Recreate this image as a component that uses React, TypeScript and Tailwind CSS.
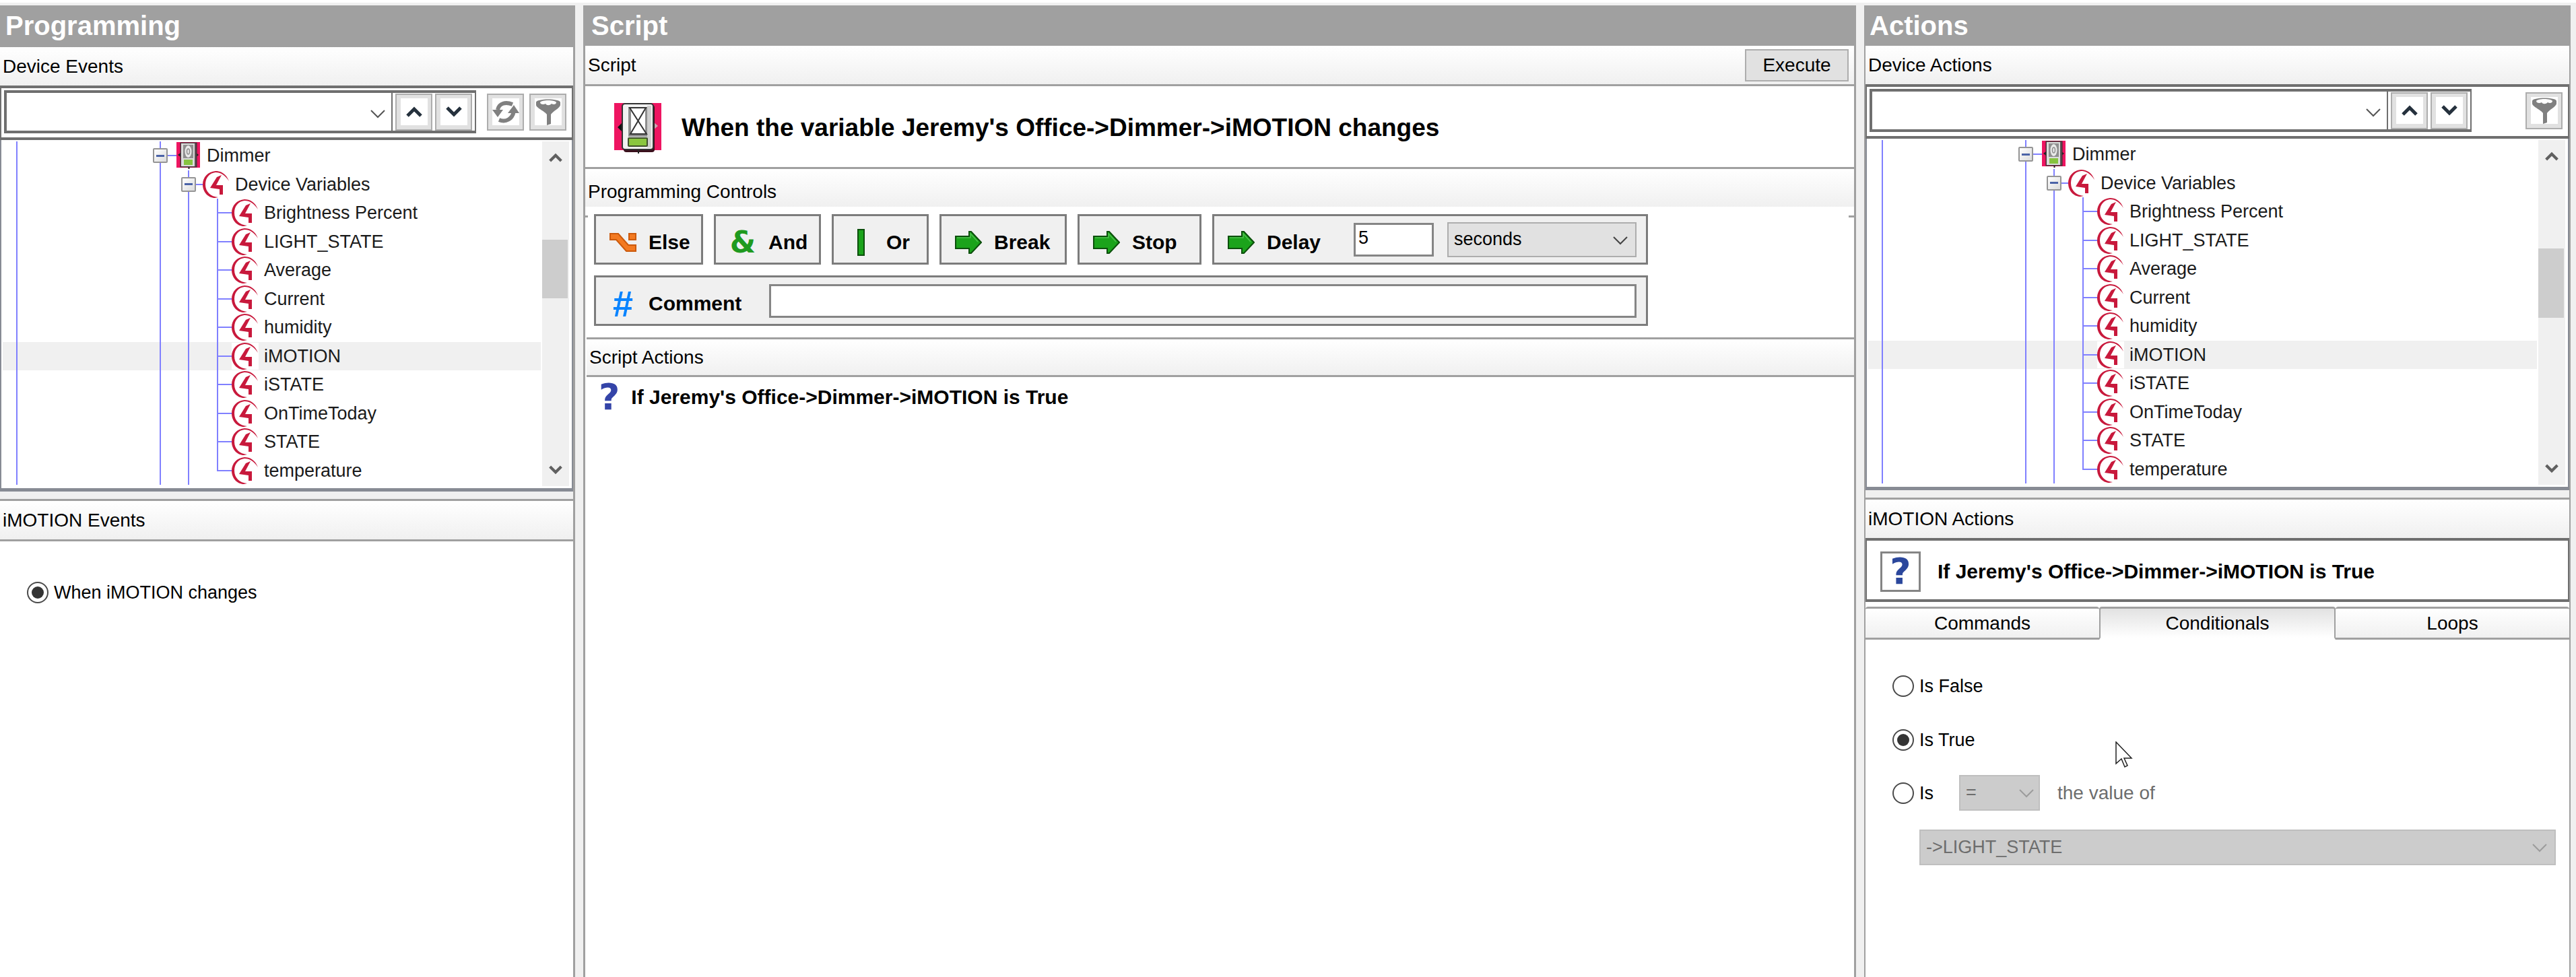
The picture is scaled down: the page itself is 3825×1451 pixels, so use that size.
import type { ReactNode } from "react";

const variables = [
  "Brightness Percent",
  "LIGHT_STATE",
  "Average",
  "Current",
  "humidity",
  "iMOTION",
  "iSTATE",
  "OnTimeToday",
  "STATE",
  "temperature",
];

function DimmerIcon({ className }: { className: string }) {
  return (
    <svg className={className} viewBox="0 0 70 75" aria-hidden="true">
      <rect width="70" height="70" fill="#ee1561" />
      <path d="M5 36l7-7v14z" fill="#111" />
      <path d="M65 34l-7-6v12z" fill="#c9a5b0" />
      <rect x="14" y="3" width="46" height="70" rx="4" fill="#3a0f1c" />
      <rect x="12" y="1" width="46" height="68" rx="4" fill="#f1f1f1" stroke="#333" strokeWidth="2" />
      <rect x="49" y="4" width="6" height="62" fill="#cfcfcf" />
      <rect x="21" y="6" width="28" height="44" fill="#8d8d8d" />
      <rect x="25" y="8" width="21" height="38" fill="#fff" />
      <path d="M23 7h24L24 46h24z M24 46L47 7M23 7l25 39" fill="none" stroke="#333" strokeWidth="2" />
      <rect x="21" y="52" width="28" height="12" rx="1" fill="#8ac63f" stroke="#3f4f2c" strokeWidth="2" />
      <path d="M36 70v5" stroke="#222" strokeWidth="2" />
    </svg>
  );
}

function DimmerIconSmall() {
  return (
    <svg className="h-10 w-[35px]" viewBox="0 0 35 40" aria-hidden="true">
      <rect width="35" height="38" fill="#ee1561" />
      <path d="M2 19l4-3v6zM33 19l-4-3v6z" fill="#222" />
      <rect x="6" y="1" width="24" height="36" fill="#5a5053" stroke="#3a2a2e" strokeWidth="1" />
      <rect x="7" y="2" width="20" height="34" fill="#dcdcdc" />
      <rect x="10" y="4" width="15" height="20" fill="#8f8f8f" />
      <ellipse cx="17.5" cy="14" rx="5" ry="9" fill="#e9e9e9" />
      <ellipse cx="17.5" cy="14" rx="2" ry="4" fill="none" stroke="#8d8d8d" strokeWidth="1.5" />
      <rect x="11" y="26" width="13" height="8" fill="#86c440" />
      <path d="M18.5 37v3" stroke="#222" strokeWidth="2" />
    </svg>
  );
}

function VariableIcon() {
  return (
    <svg className="h-10 w-10" viewBox="0 0 40 40" aria-hidden="true">
      <path
        d="M39 15C35 4 27 0 19 0 8 1 0 9 0 20s8 20 18 20l5-1C12 38 4 31 4 20 4 10 10 3 19 2c8 0 14 4 20 13z"
        fill="#c8193c"
      />
      <path d="M21 9l7-3-8 15h10v14h-5v-8l-14-2z" fill="#c8193c" />
    </svg>
  );
}

function Chevron({ className, up, width = 2 }: { className: string; up?: boolean; width?: number }) {
  return (
    <svg className={className} viewBox="0 0 24 16" fill="none" stroke="currentColor" strokeWidth={width} aria-hidden="true">
      <path d={up ? "M2 14L12 4l10 10" : "M2 2l10 10L22 2"} />
    </svg>
  );
}

function RefreshIcon() {
  return (
    <svg className="h-10 w-10" viewBox="0 0 40 40" aria-hidden="true">
      <path d="M8 17C10 7 20 5 30 9M32 19C30 31 20 36 10 32" fill="none" stroke="#808080" strokeWidth="6" />
      <path d="M0 17h16L8 28zM23 22h17L32 10z" fill="#808080" />
    </svg>
  );
}

function FilterIcon() {
  return (
    <svg className="h-10 w-9" viewBox="0 0 36 40" aria-hidden="true">
      <path d="M0 6C0 0 36 0 36 6v4c0 4-12 10-14 14v14l-6 2V24C14 20 0 14 0 10z" fill="#808080" />
      <path d="M6 6c2-4 22-4 24 0 0 3-4 4-7 2-3 3-7 3-9 0-3 2-8 1-8-2z" fill="#fff" />
    </svg>
  );
}

function ArrowIcon() {
  return (
    <svg className="h-9 w-10" viewBox="0 0 40 36" aria-hidden="true">
      <path d="M1 9h20V2l3 0 15 16-15 16h-3v-7H1z" fill="#1ba31b" stroke="#0c4f0c" strokeWidth="2" />
      <path d="M3 11h20V5l11 12" fill="none" stroke="#4cc04c" strokeWidth="1.5" />
    </svg>
  );
}

function ElseIcon() {
  return (
    <svg className="h-7 w-10" viewBox="0 0 40 28" aria-hidden="true">
      <g fill="#f37a21" stroke="#cc5a0c" strokeWidth="2">
        <path d="M1 1h12l15 17h11v9H25L10 10H1z" />
        <rect x="29" y="1" width="10" height="9" />
      </g>
    </svg>
  );
}

function PanelTitle({ children }: { children: ReactNode }) {
  return <h2 className="flex h-15 items-center bg-[#a0a0a0] px-2 text-[40px] font-bold text-white">{children}</h2>;
}

function SectionBar({ className = "h-[57px]", children }: { className?: string; children: ReactNode }) {
  return (
    <div
      className={`flex items-center justify-between bg-linear-to-b from-white to-[#f0f0f0] pr-2 pl-1 ${className}`}
    >
      {children}
    </div>
  );
}

function ToolButton({ label, children }: { label: string; children: ReactNode }) {
  return (
    <button
      type="button"
      aria-label={label}
      className="flex size-[55px] items-center justify-center border-2 border-[#adadad] bg-[#e1e1e1]"
    >
      <span className="flex size-10 items-center justify-center bg-white text-[#25313d]">{children}</span>
    </button>
  );
}

function SearchBar({ label, refresh }: { label: string; refresh?: boolean }) {
  return (
    <div className="flex items-center border-x-2 border-y-4 border-[#6f6f6f] bg-white pt-[3px] pr-2 pb-[6px] pl-1">
      <div className={`flex flex-1 items-center border-4 border-r-2 border-[#6f6f6f] ${refresh ? "mr-4" : "mr-20"}`}>
        <div className="relative flex-1 border-r-2 border-[#6f6f6f]">
          <input type="text" aria-label={label} className="block h-14 w-full bg-white px-2 text-[28px] outline-none" />
          <Chevron className="absolute top-6 right-2 h-4 w-6 text-[#555]" />
        </div>
        <div className="flex gap-1 px-1">
          <ToolButton label="Find previous">
            <Chevron up width={5} className="h-4 w-6" />
          </ToolButton>
          <ToolButton label="Find next">
            <Chevron width={5} className="h-4 w-6" />
          </ToolButton>
        </div>
      </div>
      <div className="flex gap-2">
        {refresh && (
          <ToolButton label="Refresh">
            <RefreshIcon />
          </ToolButton>
        )}
        <ToolButton label="Filter">
          <FilterIcon />
        </ToolButton>
      </div>
    </div>
  );
}

function Toggle() {
  return (
    <button
      type="button"
      aria-label="Collapse"
      className="absolute top-1/2 -left-3 flex size-[22px] -translate-y-1/2 items-center justify-center rounded-xs border-2 border-[#959595] bg-linear-to-br from-white to-[#dcdcdc]"
    >
      <span className="h-[3px] w-3 bg-[#4b63a7]" />
    </button>
  );
}

function Guide({ className }: { className: string }) {
  return <span className={`shrink-0 self-stretch border-l-2 border-[#8080ff] ${className}`} />;
}

function DeviceTree({ thumbTop, thumbHeight }: { thumbTop: string; thumbHeight: string }) {
  return (
    <div className="flex border-2 border-t-0 border-b-[5px] border-[#878b94] bg-white pt-[2px] pr-1 pb-[3px] pl-[2px]">
      <ul className="mb-[2px] grid h-[510px] min-w-0 flex-1 auto-rows-fr text-[27px] text-[#1a1a1a]">
        <li className="flex items-center pl-5">
          <Guide className="w-[213px]" />
          <span className="relative flex w-[25px] items-center self-stretch border-l-2 border-[#8080ff]">
            <span className="h-[2px] w-full bg-[#8080ff]" />
            <Toggle />
          </span>
          <DimmerIconSmall />
          <span className="ml-[10px]">Dimmer</span>
        </li>
        <li className="flex items-center pl-5">
          <Guide className="w-[213px]" />
          <Guide className="w-[42px]" />
          <span className="relative flex w-[22px] items-center self-stretch border-l-2 border-[#8080ff]">
            <span className="h-[2px] w-full bg-[#8080ff]" />
            <Toggle />
          </span>
          <VariableIcon />
          <span className="ml-2">Device Variables</span>
        </li>
        {variables.map((name, i) => (
          <li key={name} className={`flex items-center pl-5 ${name === "iMOTION" ? "bg-[#f0f0f0]" : ""}`}>
            <Guide className="w-[213px]" />
            <Guide className="w-[42px]" />
            <Guide className="w-[43px]" />
            <span className="flex w-[22px] flex-col self-stretch">
              <span className="flex-1 border-b-2 border-l-2 border-[#8080ff]" />
              <span className={`flex-1 border-[#8080ff] ${i === variables.length - 1 ? "" : "border-l-2"}`} />
            </span>
            <span className="bg-white">
              <VariableIcon />
            </span>
            <span className="ml-2">{name}</span>
          </li>
        ))}
      </ul>
      <div className="ml-[2px] flex w-10 flex-col items-center justify-between bg-[#f0f0f0] py-4 text-[#606060]">
        <Chevron up width={5} className="h-4 w-5" />
        <div className={`flex w-full flex-1 flex-col pr-[2px] ${thumbTop}`}>
          <div className={`w-full bg-[#cdcdcd] ${thumbHeight}`} />
        </div>
        <Chevron width={5} className="h-4 w-5" />
      </div>
    </div>
  );
}

function Radio({ name, label, checked }: { name: string; label: string; checked?: boolean }) {
  return (
    <label className="flex items-center gap-2 text-[27px] leading-8">
      <input
        type="radio"
        name={name}
        defaultChecked={checked}
        className="size-8 appearance-none rounded-full border-2 border-[#4a4a4a] bg-white bg-clip-content p-[5px] checked:bg-[#333]"
      />
      {label}
    </label>
  );
}

function ControlButton({ label, icon, className }: { label: string; icon: ReactNode; className: string }) {
  return (
    <button
      type="button"
      className={`flex h-[75px] items-center gap-[18px] border-3 border-[#7c7c7c] bg-[#f0f0f0] pt-2 pl-5 text-[30px] font-bold ${className}`}
    >
      <span className="flex w-10 justify-center">{icon}</span>
      {label}
    </button>
  );
}

function ProgrammingPanel() {
  return (
    <section className="flex flex-col bg-white">
      <PanelTitle>Programming</PanelTitle>
      <div className="flex flex-1 flex-col border-t-2 border-r-3 border-[#a0a0a0]">
        <SectionBar>Device Events</SectionBar>
        <SearchBar label="Search device events" refresh />
        <DeviceTree thumbTop="pt-[114px]" thumbHeight="h-[87px]" />
        <div className="h-[11px] bg-[#f0f0f0]" />
        <div className="border-y-3 border-[#a0a0a0]">
          <SectionBar>iMOTION Events</SectionBar>
        </div>
        <div className="px-10 pt-[60px]">
          <Radio name="event" label="When iMOTION changes" checked />
        </div>
      </div>
    </section>
  );
}

function ScriptPanel() {
  return (
    <section className="flex flex-col bg-white">
      <PanelTitle>
        <span className="pl-1">Script</span>
      </PanelTitle>
      <div className="flex flex-1 flex-col border-x-3 border-[#a0a0a0]">
        <SectionBar>
          Script
          <button type="button" className="h-12 w-[154px] border-2 border-[#adadad] bg-[#e1e1e1]">
            Execute
          </button>
        </SectionBar>
        <div className="flex h-[126px] items-center gap-[30px] border-y-3 border-[#a0a0a0] pt-1 pl-[43px]">
          <DimmerIcon className="h-[75px] w-[70px]" />
          <h1 className="text-[37px] font-bold">When the variable Jeremy&apos;s Office-&gt;Dimmer-&gt;iMOTION changes</h1>
        </div>
        <SectionBar className="h-14 pt-3">Programming Controls</SectionBar>
        <div className="flex justify-between pt-[11px]">
          <span className="mt-[2px] h-[3px] w-1 bg-[#a0a0a0]" />
          <div className="flex flex-1 flex-col items-start pl-[9px]">
            <div className="flex flex-col gap-4">
              <div className="flex gap-4">
                <ControlButton className="w-[162px]" label="Else" icon={<ElseIcon />} />
                <ControlButton
                  className="w-[159px]"
                  label="And"
                  icon={
                    <span className="font-['DejaVu_Sans',sans-serif] text-[44px] leading-9 font-bold text-[#1f9a1f]">
                      &amp;
                    </span>
                  }
                />
                <ControlButton
                  className="w-[144px]"
                  label="Or"
                  icon={<span className="h-10 w-[11px] border-2 border-[#0c4f0c] bg-[#1ba31b]" />}
                />
                <ControlButton className="w-[189px]" label="Break" icon={<ArrowIcon />} />
                <ControlButton className="w-[184px]" label="Stop" icon={<ArrowIcon />} />
                <div className="flex h-[75px] w-[647px] items-center border-3 border-[#7c7c7c] bg-[#f0f0f0] pr-[14px] pl-5">
                  <label htmlFor="delay" className="flex flex-1 items-center gap-[18px] pt-2 text-[30px] font-bold">
                    <ArrowIcon />
                    Delay
                  </label>
                  <input
                    id="delay"
                    type="text"
                    defaultValue="5"
                    className="h-[50px] w-[119px] border-3 border-[#858585] bg-white px-1 pb-1 text-[27px]"
                  />
                  <div className="relative ml-5">
                    <select
                      aria-label="Delay unit"
                      className="h-[52px] w-[281px] appearance-none border-2 border-[#adadad] bg-[#e1e1e1] px-2 text-[27px]"
                    >
                      <option>seconds</option>
                    </select>
                    <Chevron className="pointer-events-none absolute top-5 right-3 h-4 w-6 text-[#444]" />
                  </div>
                </div>
              </div>
              <div className="flex h-[75px] items-center border-3 border-[#7c7c7c] bg-[#f0f0f0] pr-[14px] pl-5">
                <label htmlFor="comment" className="flex w-[237px] items-center gap-[18px] pt-2 text-[30px] font-bold">
                  <span className="w-10 text-center text-[54px] leading-9 text-[#0a84ff]">#</span>
                  Comment
                </label>
                <input id="comment" type="text" className="h-[50px] flex-1 border-3 border-[#858585] bg-white px-2" />
              </div>
            </div>
          </div>
          <span className="mt-[2px] h-[3px] w-2 bg-[#a0a0a0]" />
        </div>
        <div className="mt-[17px] ml-[2px] border-y-3 border-[#a0a0a0]">
          <SectionBar className="h-[53px]">Script Actions</SectionBar>
        </div>
        <div className="flex items-center gap-[17px] pt-2 pl-5">
          <span className="font-['DejaVu_Sans',sans-serif] text-[54px] leading-[44px] font-bold text-[#3444a8]">?</span>
          <span className="text-[30px] leading-[44px] font-bold">
            If Jeremy&apos;s Office-&gt;Dimmer-&gt;iMOTION is True
          </span>
        </div>
      </div>
    </section>
  );
}

function Tab({ label, active }: { label: string; active?: boolean }) {
  return (
    <button
      type="button"
      role="tab"
      aria-selected={!!active}
      className={`h-[49px] flex-1 rounded-t-sm border-y-3 border-[#a0a0a0] ${
        active
          ? "border-x-2 border-b-white bg-linear-to-b from-[#e2e2e2] to-white"
          : "bg-linear-to-b from-white to-[#f0f0f0]"
      }`}
    >
      {label}
    </button>
  );
}

function ActionsPanel() {
  return (
    <section className="flex flex-col bg-white">
      <PanelTitle>Actions</PanelTitle>
      <div className="flex flex-1 flex-col border-x-2 border-[#a0a0a0]">
        <SectionBar>Device Actions</SectionBar>
        <SearchBar label="Search device actions" />
        <DeviceTree thumbTop="pt-[129px]" thumbHeight="h-[103px]" />
        <div className="h-[11px] bg-[#f0f0f0]" />
        <div className="border-t-3 border-[#a0a0a0]">
          <SectionBar>iMOTION Actions</SectionBar>
        </div>
        <div className="flex h-[95px] items-center gap-[25px] border-x-2 border-y-4 border-[#6f6f6f] pt-1 pl-5">
          <span className="flex size-15 items-center justify-center border-3 border-[#858585] font-['DejaVu_Sans',sans-serif] text-[54px] leading-[54px] font-bold text-[#2b479c]">
            ?
          </span>
          <span className="text-[30px] font-bold">If Jeremy&apos;s Office-&gt;Dimmer-&gt;iMOTION is True</span>
        </div>
        <div role="tablist" className="mt-[7px] flex">
          <Tab label="Commands" />
          <Tab label="Conditionals" active />
          <Tab label="Loops" />
        </div>
        <div className="relative flex flex-col pt-[53px] pr-5 pl-10">
          <Radio name="condition" label="Is False" />
          <div className="mt-12">
            <Radio name="condition" label="Is True" checked />
          </div>
          <div className="mt-9 flex items-center">
            <Radio name="condition" label="Is" />
            <div className="relative ml-[38px]">
              <select
                disabled
                aria-label="Comparison"
                className="h-[53px] w-[120px] appearance-none border-2 border-[#bfbfbf] bg-[#cccccc] px-2 text-[27px] text-[#6d6d6d] opacity-100"
              >
                <option>=</option>
              </select>
              <Chevron className="pointer-events-none absolute top-5 right-2 h-4 w-6 text-[#9c9c9c]" />
            </div>
            <span className="ml-[26px] text-[#6d6d6d]">the value of</span>
          </div>
          <div className="relative mt-7 ml-10">
            <select
              disabled
              aria-label="Variable"
              className="h-[53px] w-full appearance-none border-2 border-[#bfbfbf] bg-[#cccccc] px-2 text-[27px] text-[#6d6d6d] opacity-100"
            >
              <option>-&gt;LIGHT_STATE</option>
            </select>
            <Chevron className="pointer-events-none absolute top-5 right-3 h-4 w-6 text-[#9c9c9c]" />
          </div>
          <svg className="absolute top-[151px] left-[371px] h-10 w-7" viewBox="0 0 28 40" aria-hidden="true">
            <path d="M1 1v32l8-7 5 12 4-2-5-11h11z" fill="#fff" stroke="#222" strokeWidth="1.5" />
          </svg>
        </div>
      </div>
    </section>
  );
}

export default function App() {
  return (
    <main className="grid min-h-screen grid-cols-[854fr_1890fr_1049fr] gap-3 border-t-4 border-white bg-[#f0f0f0] pt-1 pr-2 font-['Liberation_Sans',Arial,sans-serif] text-[28px] text-black">
      <ProgrammingPanel />
      <ScriptPanel />
      <ActionsPanel />
    </main>
  );
}
